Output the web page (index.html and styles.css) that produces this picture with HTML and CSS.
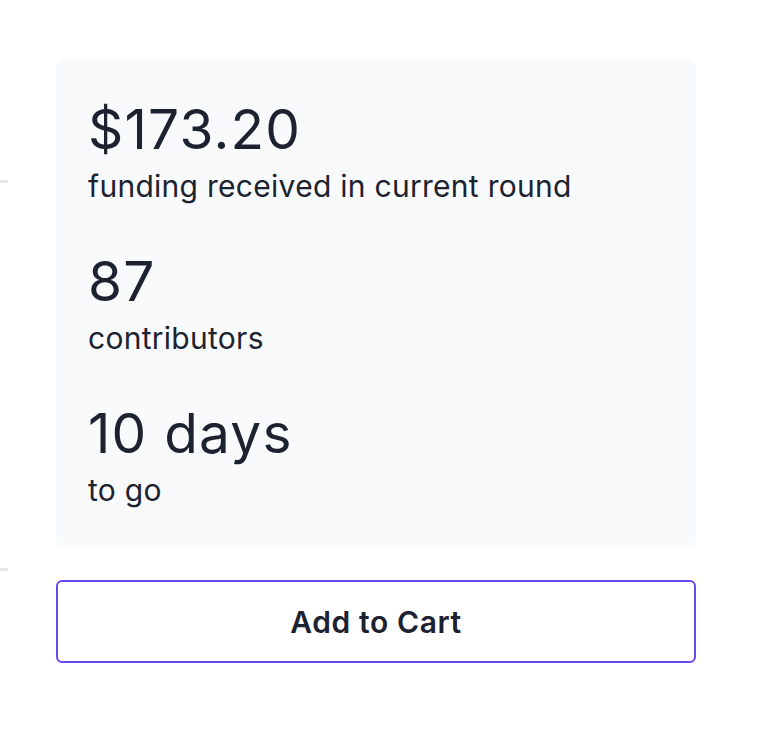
FILE: index.html
```html
<!DOCTYPE html>
<html lang="en">
<head>
<meta charset="utf-8">
<title>Funding</title>
<link rel="stylesheet" href="styles.css">
</head>
<body>
<div class="page">
  <div class="edge">
    <div class="edge-line edge-line-top"></div>
    <div class="edge-line edge-line-bottom"></div>
  </div>
  <aside class="sidebar">
    <div class="stats">
      <div class="stat">
        <div class="stat-value">$173.20</div>
        <div class="stat-label">funding received in current round</div>
      </div>
      <div class="stat">
        <div class="stat-value">87</div>
        <div class="stat-label">contributors</div>
      </div>
      <div class="stat">
        <div class="stat-value">10 days</div>
        <div class="stat-label">to go</div>
      </div>
    </div>
    <button class="cart-btn" type="button">Add to Cart</button>
  </aside>
</div>
</body>
</html>
```

FILE: styles.css
```css
* { box-sizing: border-box; }
html, body {
  margin: 0;
  padding: 0;
  background: #ffffff;
}
body {
  font-family: Inter, "Noto Sans", "Liberation Sans", sans-serif;
  color: #1c2230;
}
.page {
  display: flex;
  width: 778px;
  height: 740px;
}
.edge {
  width: 8px;
  flex: none;
}
.edge-line {
  height: 3px;
  background: #e5e7eb;
}
.edge-line-top { margin-top: 180px; }
.edge-line-bottom { margin-top: 385px; }
.sidebar {
  margin-left: 48px;
  width: 640px;
  padding-top: 59px;
  display: flex;
  flex-direction: column;
}
.stats {
  background: #f9fafb;
  border-radius: 8px;
  padding: 40px 32px 36px 32px;
  display: flex;
  flex-direction: column;
  gap: 44px;
}
.stat {
  display: flex;
  flex-direction: column;
}
.stat-value {
  font-size: 55px;
  line-height: 60px;
  font-weight: 400;
  letter-spacing: 1.2px;
}
.stat-label {
  margin-top: 6px;
  font-size: 30px;
  line-height: 42px;
  font-weight: 400;
  letter-spacing: 0.28px;
}
.cart-btn {
  margin-top: 33px;
  height: 83px;
  width: 640px;
  background: #ffffff;
  border: 2px solid #6b46ee;
  border-radius: 6px;
  font-family: Inter, "Noto Sans", "Liberation Sans", sans-serif;
  font-size: 30px;
  font-weight: 600;
  letter-spacing: 0.6px;
  color: #1c2230;
  cursor: pointer;
}
```
